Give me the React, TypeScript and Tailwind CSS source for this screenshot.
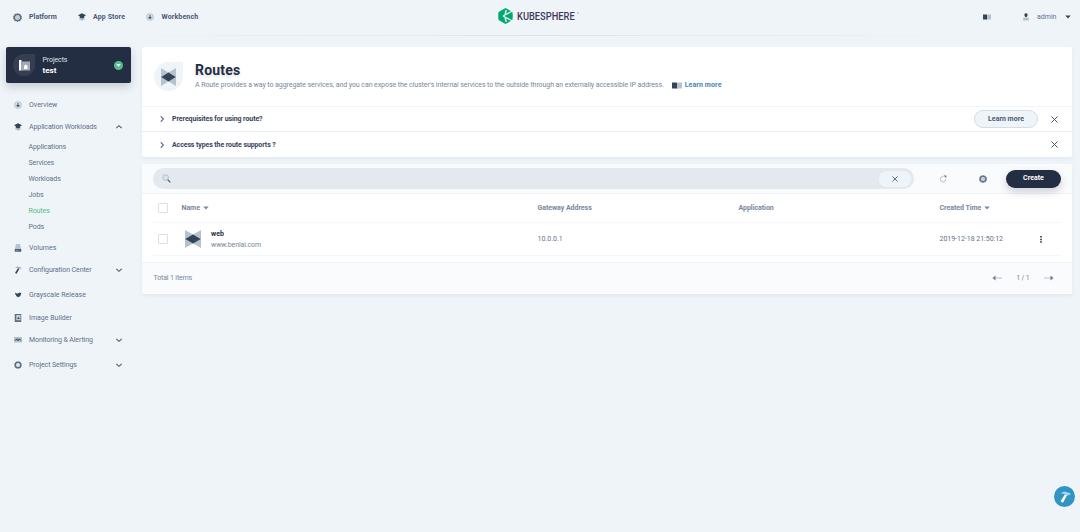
import type { ReactNode } from "react";

type IconProps = { className?: string };

/* ICONS */
function GearIcon({ className = "h-[8px] w-[8px]" }: IconProps) {
  return (
    <svg viewBox="0 0 16 16" className={className}>
      <path
        d="M8 0l2.200 1.600 2.700-.2.8 2.600 2.200 1.600L15 8l.9 2.400-2.200 1.600-.8 2.600-2.700-.2L8 16l-2.200-1.600-2.700.2-.8-2.600L.1 10.400 1 8 .1 5.600l2.200-1.600.8-2.600 2.700.2z"
        fill="#5b6e82"
      />
      <circle cx="8" cy="8" r="4.500" fill="#c3ced8" />
    </svg>
  );
}

function RingIcon({ className = "h-[8px] w-[8px]" }: IconProps) {
  return (
    <svg viewBox="0 0 16 16" className={className}>
      <circle cx="8" cy="8" r="5.500" fill="#e6ecf1" stroke="#5b6e82" strokeWidth="3" />
      <circle cx="8" cy="8" r="7.300" fill="none" stroke="#5b6e82" strokeDasharray="2.500 3.230" />
    </svg>
  );
}

function StoreIcon({ className = "h-[8px] w-[8px]" }: IconProps) {
  return (
    <svg viewBox="0 0 16 16" className={className}>
      <path d="M1.500 9.500L8 8l6.500 1.500-2 1.500 2 1.500L8 15.500l-6.500-3 2-1.500z" fill="#b6c2cd" />
      <path d="M8 .5l8 4-3.500 2V9L8 11 3.500 9V6.500L0 4.500z" fill="#324558" />
    </svg>
  );
}

function GaugeIcon({ className = "h-[8px] w-[8px]" }: IconProps) {
  return (
    <svg viewBox="0 0 16 16" className={className}>
      <circle cx="8" cy="8" r="7" fill="#d5dde5" stroke="#b6c2cd" strokeWidth="1.500" />
      <path d="M7 4h2v3.500L11.500 9 10 11.500H6L4.500 9 7 7.500z" fill="#4a5e74" />
    </svg>
  );
}

function VolumeIcon({ className = "h-[8px] w-[8px]" }: IconProps) {
  return (
    <svg viewBox="0 0 16 16" className={className}>
      <path d="M4 0h8l2 10H2z" fill="#b6c2cd" />
      <path d="M1.500 10h13v5.500h-13z" fill="#4a5e74" />
      <path d="M3 12.500h6v1H3z" fill="#b6c2cd" />
    </svg>
  );
}

function HammerIcon({ className = "h-[8px] w-[8px]", light = false }: IconProps & { light?: boolean }) {
  return (
    <svg viewBox="0 0 16 16" className={className}>
      <path d="M2 3.500C5 .5 9 .8 11 2l3.500.8.8 2.700-2-.8-1.300 1.500-3-1.700C7 3.500 5 3 2 3.500z" fill={light ? "#a9dcf2" : "#a5b2c0"} />
      <path d="M8 4.300l2.700 1.400L5.200 15.500 2 13.800z" fill={light ? "#ffffff" : "#324558"} />
    </svg>
  );
}

function BirdIcon({ className = "h-[8px] w-[8px]" }: IconProps) {
  return (
    <svg viewBox="0 0 16 16" className={className}>
      <path d="M2 3.500l5 1.800L9 4l2-1 1.500.8 2.500-.2-1.300 2.700C13.500 9.500 11.500 11.500 8.500 12L7.500 13.500 7 11.500C5 11 4 9.500 4.300 8.500 3 7.500 2 6 2 3.500z" fill="#324558" />
    </svg>
  );
}

function ImageIcon({ className = "h-[8px] w-[8px]" }: IconProps) {
  return (
    <svg viewBox="0 0 16 16" className={className}>
      <path d="M1.500 0h13v16h-13z" fill="#5b6e82" />
      <path d="M4.500 2H13v10.500H4.500z" fill="#c3ced8" />
      <path d="M6 10l3-4 3 4z" fill="#324558" />
    </svg>
  );
}

function MonitorIcon({ className = "h-[8px] w-[8px]" }: IconProps) {
  return (
    <svg viewBox="0 0 16 16" className={className}>
      <path d="M0 2h16v11H0z" fill="#b6c2cd" />
      <path d="M1.500 8h3L6 5.500l2 4.500 2.500-4.500L12 8h2.500" fill="none" stroke="#324558" strokeWidth="1.700" />
    </svg>
  );
}

function BookIcon({ className = "h-[7px] w-[9px]" }: IconProps) {
  return (
    <svg viewBox="0 0 18 14" preserveAspectRatio="none" className={className}>
      <path d="M0 1h8l1 1v12l-1-1H0z" fill="#324558" />
      <path d="M9 2l1-1h8v12h-8l-1 1z" fill="#b6c2cd" />
    </svg>
  );
}

function UserIcon({ className = "h-[8px] w-[8px]" }: IconProps) {
  return (
    <svg viewBox="0 0 16 16" className={className}>
      <path d="M2 15v-3.500C2 10 4 9 6 9h4c2 0 4 1 4 2.500V15z" fill="#b6c2cd" />
      <path d="M5 2C6 .2 10 .2 11 2v3L9.500 8h-3L5 5z" fill="#324558" />
    </svg>
  );
}

function RouteIcon({ className = "" }: IconProps) {
  return (
    <svg viewBox="0 0 16 18" preserveAspectRatio="none" className={className}>
      <path d="M0 0l8 4.500L16 0v18l-8-4.500L0 18z" fill="#b6c2cd" />
      <path d="M.3 9L8 4.500 15.700 9 8 13.500z" fill="#324558" />
    </svg>
  );
}

function Chevron({ className = "" }: IconProps) {
  return (
    <svg viewBox="0 0 8 8" className={`h-[8px] w-[8px] ${className}`}>
      <path d="M1.300 2.800L4 5.300l2.700-2.500" fill="none" stroke="#4a5974" strokeWidth="1.100" />
    </svg>
  );
}

function CloseIcon({ className = "h-[7px] w-[7px]" }: IconProps) {
  return (
    <svg viewBox="0 0 7 7" className={className}>
      <path d="M.5.5l6 6M6.500.5l-6 6" fill="none" stroke="#4a5974" strokeWidth="1" />
    </svg>
  );
}

function Caret({ className = "text-[#79879c]" }: IconProps) {
  return (
    <svg viewBox="0 0 6 4" className={`h-[4px] w-[6px] ${className}`}>
      <path d="M.3.4h5.400L3 3.500z" fill="currentColor" />
    </svg>
  );
}

function Arrow({ className = "" }: IconProps) {
  return (
    <svg viewBox="0 0 10 6" className={`h-[6px] w-[10px] ${className}`}>
      <path d="M3 3h7" stroke="#b6c2cd" strokeWidth="1" />
      <path d="M3.500.5v5L.5 3z" fill="#6f7f92" />
    </svg>
  );
}

/* TOP BAR */
function Header() {
  return (
    <header className="relative flex h-[35px] items-center pb-px pl-[13px] pr-[9px] text-[7px] font-bold text-[#4a5974]">
      <a className="flex w-[65px] items-center gap-[7px] tracking-[0.02px]">
        <GearIcon className="h-[9px] w-[9px]" />
        Platform
      </a>
      <a className="flex w-[68px] items-center gap-[7px] tracking-[0.12px]">
        <StoreIcon />
        App Store
      </a>
      <a className="flex items-center gap-[7.5px] tracking-[0.14px]">
        <GaugeIcon />
        Workbench
      </a>

      <div className="absolute left-[498px] top-[8px] flex items-center">
        <svg viewBox="0 0 28 32" className="h-[16px] w-[15px]">
          <path d="M14 0l14 8v16l-14 8L0 24V8z" fill="#00a971" />
          <path d="M15.500 4L13 13.500M9 16l19-10M9 16l19 10M15.500 28L13 18.500" fill="none" stroke="#eff4f9" strokeWidth="2.600" />
          <path d="M0 10l5 6-5 6z" fill="#00a971" />
          <path d="M19 16l9-4.500v9z" fill="#00a971" />
        </svg>
        <span className="ml-[4px] origin-left scale-x-[0.81] text-[11.5px] font-medium leading-[16px] text-[#41395a]">
          KUBESPHERE
        </span>
        <span className="absolute left-[79px] top-[4px] h-[2px] w-[2px] rounded-full bg-[#bfc4cf]" />
      </div>

      <BookIcon className="ml-auto h-[6px] w-[8px]" />
      <div className="ml-[31px] flex items-center font-normal text-[#5f7191]">
        <UserIcon />
        <span className="ml-[7px] w-[28px]">admin</span>
        <Caret className="text-[#324558]" />
      </div>
      <div className="absolute bottom-[-1px] left-[90px] right-[90px] h-px bg-linear-to-r from-transparent via-[#dfe4ea] to-transparent" />
    </header>
  );
}

/* SIDEBAR */
type NavItem = {
  label: string;
  icon: ReactNode;
  collapsible?: boolean;
  children?: string[];
};

const navItems: NavItem[] = [
  { label: "Overview", icon: <GaugeIcon /> },
  {
    label: "Application Workloads",
    icon: <StoreIcon />,
    collapsible: true,
    children: ["Applications", "Services", "Workloads", "Jobs", "Routes", "Pods"],
  },
  { label: "Volumes", icon: <VolumeIcon /> },
  { label: "Configuration Center", icon: <HammerIcon />, collapsible: true },
  { label: "Grayscale Release", icon: <BirdIcon /> },
  { label: "Image Builder", icon: <ImageIcon /> },
  { label: "Monitoring & Alerting", icon: <MonitorIcon />, collapsible: true },
  { label: "Project Settings", icon: <RingIcon />, collapsible: true },
];

function Sidebar() {
  return (
    <aside className="w-[125px] shrink-0">
      <div className="flex h-[36px] items-center rounded-[2px] bg-[#242e42] pl-[7px] pr-[8px] shadow-[0_4px_8px_rgba(36,46,66,0.2)]">
        <div className="flex h-[22px] w-[22px] items-center justify-center rounded-full rounded-tr-[2px] bg-[#363f52]">
          <svg viewBox="0 0 11 11" className="h-[11px] w-[11px]">
            <path d="M0 0h2.500v10.500H0z" fill="#ffffff" />
            <path d="M2.500 1.500H11v9H2.500z" fill="#a4abb6" />
            <path d="M5 9V6l1.800-1.500L8.500 6v3z" fill="#ffffff" />
          </svg>
        </div>
        <div className="ml-[7.5px] text-[7px] text-white">
          <p className="leading-[12px] tracking-[-0.1px] text-[#dfe2e8]">Projects</p>
          <p className="text-[8px] font-bold leading-[10px]">test</p>
        </div>
        <div className="ml-auto flex h-[9px] w-[9px] items-center justify-center rounded-full bg-[#55bc8a]">
          <svg viewBox="0 0 6 4" className="h-[3px] w-[5px]">
            <path d="M0 0h6L3 3.500z" fill="#ffffff" />
          </svg>
        </div>
      </div>

      <nav className="pt-[11.5px] text-[7px] text-[#5f708a]">
        {navItems.map((item) => (
          <div key={item.label} className={item.collapsible && !item.children ? "mb-[5px]" : "mb-[2.5px]"}>
            <div className="flex h-5 items-center pl-[8px] pr-[8px]">
              {item.icon}
              <span className={item.collapsible ? "ml-[7px] pt-px tracking-[-0.1px]" : "ml-[7px] pt-px"}>
                {item.label}
              </span>
              {item.collapsible && <Chevron className={item.children ? "ml-auto rotate-180" : "ml-auto"} />}
            </div>
            {item.children && (
              <ul className="pl-[22.5px] pt-[2px] tracking-[-0.1px]">
                {item.children.map((child) => (
                  <li key={child} className={child === "Routes" ? "h-4 leading-4 text-[#55bc8a]" : "h-4 leading-4"}>
                    {child}
                  </li>
                ))}
              </ul>
            )}
          </div>
        ))}
      </nav>
    </aside>
  );
}

/* BANNER */
function Banner() {
  return (
    <section className="h-[110px] rounded-[2px] bg-white shadow-[0_2px_4px_rgba(36,46,66,0.06)]">
      <div className="flex h-[59px] pl-[12px] pt-[14px]">
        <div className="mt-px flex h-[29px] w-[29px] items-center justify-center rounded-full rounded-tr-[2px] bg-[#eff4f9]">
          <RouteIcon className="h-[18px] w-[15px]" />
        </div>
        <div className="ml-[12px]">
          <h1 className="text-[14px] font-bold leading-[18px] tracking-[0.2px] text-[#242e42] [text-shadow:0_2px_3px_rgba(36,46,66,0.15)]">
            Routes
          </h1>
          <p className="flex items-center text-[7px] leading-[13px] tracking-[-0.075px] text-[#79879c]">
            A Route provides a way to aggregate services, and you can expose the cluster's internal services to the
            outside through an externally accessible IP address.
            <BookIcon className="ml-[8px] h-[7px] w-[10px]" />
            <a className="ml-[3px] font-bold tracking-[0.1px] text-[#4385b8]">Learn more</a>
          </p>
        </div>
      </div>

      <div className="flex h-[25px] items-center border-t border-[#eff4f9] pl-[16px] pr-[14px] text-[7px] font-bold text-[#36435c]">
        <Chevron className="-rotate-90" />
        <span className="ml-[6px] tracking-[-0.1px]">Prerequisites for using route?</span>
        <button className="ml-auto h-[18px] w-[64px] rounded-full border border-[#d5dce6] bg-[#eff4f9] text-[#4a5974]">
          Learn more
        </button>
        <CloseIcon className="ml-[13px] h-[7px] w-[7px]" />
      </div>
      <div className="flex h-[26px] items-center border-t border-[#e8eef4] pl-[16px] pr-[14px] text-[7px] font-bold text-[#36435c]">
        <Chevron className="-rotate-90" />
        <span className="ml-[6px] pt-px tracking-[-0.1px]">Access types the route supports ?</span>
        <CloseIcon className="ml-auto h-[7px] w-[7px]" />
      </div>
    </section>
  );
}

/* TABLE */
const columns = "grid grid-cols-[28.5px_356px_201px_201px_1fr] items-center";

function Checkbox() {
  return <span className="ml-[5px] block h-[10px] w-[10px] rounded-[1px] border border-[#dbe0e7] bg-white" />;
}

function RoutesTable() {
  return (
    <section className="mt-[7px] h-[130px] overflow-hidden rounded-[2px] bg-white text-[7px] shadow-[0_2px_4px_rgba(36,46,66,0.06)]">
      <div className="flex h-[30px] items-center border-b border-[#eff4f9] bg-[#f9fbfd] pl-[11px] pr-[11px]">
        <div className="flex h-[21px] w-[761px] items-center rounded-full bg-[#e3e9ef] pl-[9px] pr-[3px]">
          <svg viewBox="0 0 10 10" className="h-[9px] w-[9px]">
            <circle cx="4" cy="4" r="3.200" fill="#dce3ea" stroke="#aab6c3" strokeWidth=".9" />
            <path d="M6.300 6.300l3 3" stroke="#4a5e74" strokeWidth="1.400" />
          </svg>
          <button className="ml-auto flex h-[16px] w-[32px] items-center justify-center rounded-full bg-[#eff4f9]">
            <CloseIcon className="h-[6px] w-[6px]" />
          </button>
        </div>
        <svg viewBox="0 0 8 8" className="ml-[25px] h-[8px] w-[8px]">
          <path d="M4.500 1.600A2.700 2.700 0 1 0 6.700 4.300" fill="none" stroke="#b6c2cd" strokeWidth="1" />
          <path d="M4.500.4h2.800v2.600z" fill="#5b6e82" />
        </svg>
        <GearIcon className="ml-[32px] h-[8px] w-[8px]" />
        <button className="ml-auto h-[18px] w-[55px] rounded-full bg-[#242e42] font-bold text-white shadow-[0_4px_8px_rgba(36,46,66,0.2)]">
          Create
        </button>
      </div>

      <div className="px-[11px]">
        <div className={`${columns} h-[29px] border-b border-[#f5f7fa] font-bold tracking-[-0.04px] text-[#79879c]`}>
          <Checkbox />
          <span className="flex items-center gap-[3px]">
            Name <Caret />
          </span>
          <span>Gateway Address</span>
          <span>Application</span>
          <span className="flex items-center gap-[3px]">
            Created Time <Caret />
          </span>
        </div>

        <div className={`${columns} h-[33px] border-b border-[#f5f7fa] text-[#5f708a]`}>
          <Checkbox />
          <div className="flex items-center pl-[3.5px]">
            <RouteIcon className="h-[18px] w-[16px]" />
            <div className="ml-[10px] pt-px leading-[11px]">
              <p className="font-bold text-[#242e42]">web</p>
              <p className="tracking-[-0.11px] text-[#79879c]">www.benlai.com</p>
            </div>
          </div>
          <span>10.0.0.1</span>
          <span />
          <div className="flex items-center justify-between pr-[19px]">
            <span className="tracking-[-0.03px]">2019-12-18 21:50:12</span>
            <svg viewBox="0 0 2 8" className="mt-px h-[7px] w-[2px]">
              <path d="M0 0h2v1.800H0zM0 3h2v1.800H0zM0 6h2v1.800H0z" fill="#36435c" />
            </svg>
          </div>
        </div>
      </div>

      <div className="mt-[6px] flex h-[32px] items-center border-t border-[#eff4f9] bg-[#f9fbfd] pl-[11.5px] pr-[18px] text-[#79879c]">
        <span className="tracking-[-0.15px]">Total 1 items</span>
        <Arrow className="mb-px ml-auto" />
        <span className="ml-[14px] mr-[14.5px] tracking-[-0.2px]">1 / 1</span>
        <Arrow className="mb-px rotate-180" />
      </div>
    </section>
  );
}

export default function App() {
  return (
    <div className="h-[532px] w-[1080px] overflow-hidden bg-[#eff4f9] font-[Roboto,sans-serif]">
      <Header />
      <div className="flex pl-[6px] pr-[8px] pt-[12px]">
        <Sidebar />
        <main className="ml-[11px] flex-1">
          <Banner />
          <RoutesTable />
        </main>
      </div>

      <button className="fixed left-[1054px] top-[486px] flex h-[21px] w-[21px] items-center justify-center rounded-full bg-[#3294c5]">
        <HammerIcon light className="h-[12px] w-[12px]" />
      </button>
    </div>
  );
}
